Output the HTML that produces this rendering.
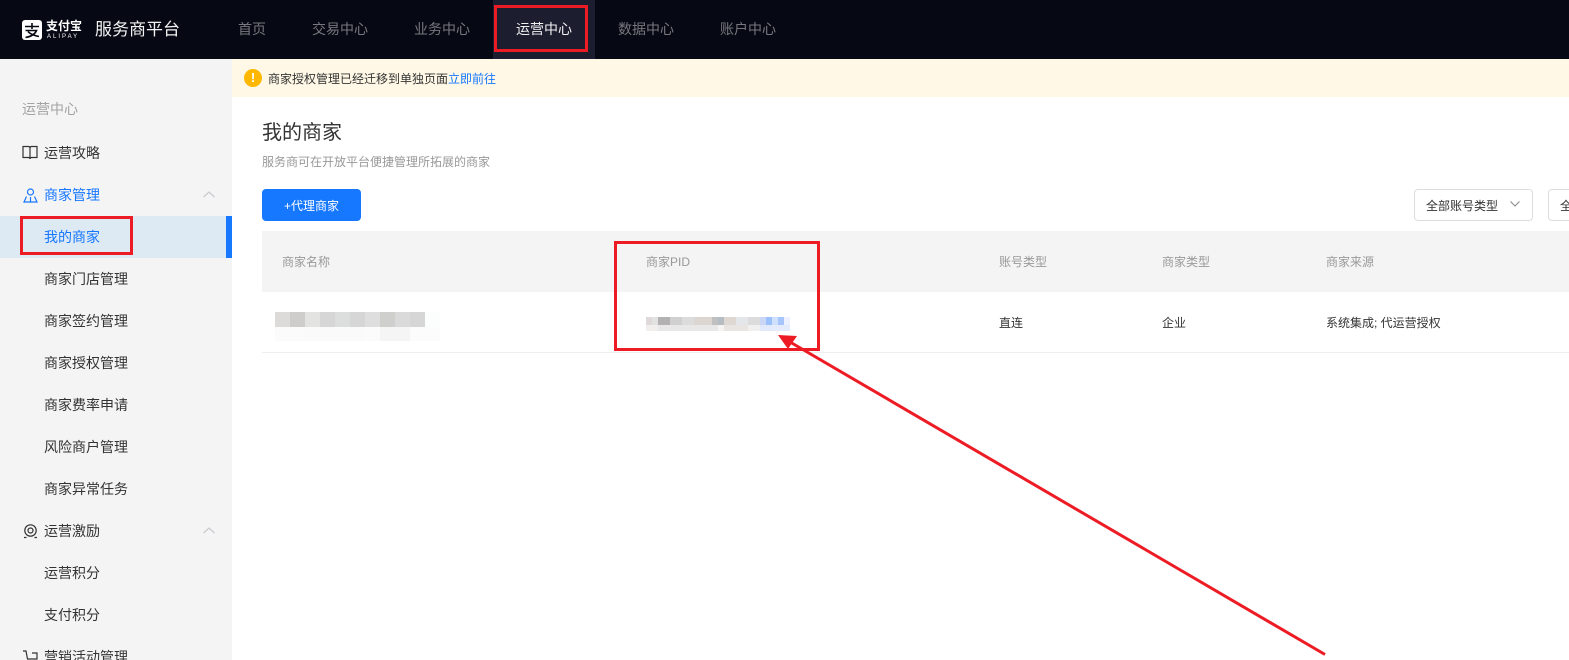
<!DOCTYPE html>
<html lang="zh-CN"><head><meta charset="utf-8"><title>服务商平台</title>
<style>
html,body{margin:0;padding:0;width:1569px;height:660px;overflow:hidden;background:#fff}
body{position:relative;font-family:"Liberation Sans","Noto Sans CJK SC",sans-serif;font-size:14px;color:#333}
.a{position:absolute;white-space:nowrap}
.nav{top:0;height:59px;line-height:58px;font-size:14px;color:#77787d}
.side{left:44px;height:42px;line-height:42px;font-size:14px;color:#333}
.th{top:232px;height:61px;line-height:61px;font-size:12px;color:#999}
.td{top:293px;height:60px;line-height:61px;font-size:12px;color:#333}
.red{border:3px solid #ed1c24;box-sizing:border-box}
svg{position:absolute;overflow:visible}
</style></head><body>
<div class="a" style="left:0;top:0;width:1569px;height:59px;background:#060914"></div>
<svg style="left:22px;top:20px" width="20" height="20" viewBox="0 0 20 20"><rect width="20" height="20" rx="3" fill="#fff"/><path d="M3 6.500h14M10 3v6M3.500 10.500h11c-1.500 3.500-5 6-11 7M6 11.500c2 2.500 6 4 11 5" stroke="#060914" stroke-width="1.600" fill="none"/></svg>
<div class="a" style="left:46px;top:18px;font-size:12px;line-height:16px;color:#fff;font-weight:700">支付宝</div>
<div class="a" style="left:47px;top:34px;font-size:6px;line-height:6px;color:#fff;letter-spacing:2px">ALIPAY</div>
<div class="a" style="left:95px;top:17px;font-size:17px;line-height:25px;color:#f2f2f2">服务商平台</div>
<div class="a nav" style="left:238px">首页</div>
<div class="a nav" style="left:312px">交易中心</div>
<div class="a nav" style="left:414px">业务中心</div>
<div class="a" style="left:493px;top:0;width:102px;height:59px;background:#1c1e30"></div>
<div class="a nav" style="left:516px;color:#f0f0f0">运营中心</div>
<div class="a nav" style="left:618px">数据中心</div>
<div class="a nav" style="left:720px">账户中心</div>

<div class="a" style="left:0;top:59px;width:232px;height:601px;background:#f4f4f4"></div>
<div class="a" style="left:22px;top:98px;font-size:14px;line-height:22px;color:#a3a3a3">运营中心</div>
<svg style="left:22px;top:145px" width="16" height="16" viewBox="0 0 16 16" fill="none" stroke="#333" stroke-width="1.200"><path d="M1 1.500h5.500q1.500 0 1.500 1.500v11q0-1.500-1.500-1.500H1zM15 1.500H9.500Q8 1.500 8 3v11q0-1.500 1.500-1.500H15z"/></svg>
<div class="a side" style="top:132px">运营攻略</div>
<svg style="left:23px;top:188px" width="15" height="15" viewBox="0 0 15 15" fill="none" stroke="#1677ff" stroke-width="1.200"><circle cx="7.500" cy="4" r="3"/><path d="M3.500 8.500 1 14h13l-2.500-5.500M7.500 9v5"/></svg>
<div class="a side" style="top:174px;color:#1677ff">商家管理</div>
<svg style="left:203px;top:191px" width="12" height="7" fill="none" stroke="#c9c9cf" stroke-width="1.200"><path d="M.5 6 6 1l5.500 5"/></svg>
<div class="a" style="left:0;top:216px;width:232px;height:42px;background:#dde9f3"></div>
<div class="a" style="left:226px;top:216px;width:6px;height:42px;background:#1677ff"></div>
<div class="a side" style="top:216px;color:#1677ff">我的商家</div>
<div class="a side" style="top:258px">商家门店管理</div>
<div class="a side" style="top:300px">商家签约管理</div>
<div class="a side" style="top:342px">商家授权管理</div>
<div class="a side" style="top:384px">商家费率申请</div>
<div class="a side" style="top:426px">风险商户管理</div>
<div class="a side" style="top:468px">商家异常任务</div>
<svg style="left:23px;top:524px" width="15" height="15" viewBox="0 0 15 15" fill="none" stroke="#333" stroke-width="1.200"><circle cx="7.500" cy="6.500" r="5.700"/><circle cx="7.500" cy="6.500" r="2.500"/><path d="M1 13.500h2.500M11.500 13.500H14"/></svg>
<div class="a side" style="top:510px">运营激励</div>
<svg style="left:203px;top:527px" width="12" height="7" fill="none" stroke="#c9c9cf" stroke-width="1.200"><path d="M.5 6 6 1l5.500 5"/></svg>
<div class="a side" style="top:552px">运营积分</div>
<div class="a side" style="top:594px">支付积分</div>
<svg style="left:23px;top:650px" width="15" height="12" viewBox="0 0 15 12" fill="none" stroke="#333" stroke-width="1.200"><path d="M0 1h3l1.500 8H14V3H9"/></svg>
<div class="a side" style="top:636px">营销活动管理</div>

<div class="a" style="left:232px;top:59px;width:1337px;height:38px;background:#fff8e6"></div>
<div class="a" style="left:244px;top:69px;width:18px;height:18px;border-radius:50%;background:#ffb700;color:#fff;font-size:13px;line-height:18px;text-align:center;font-weight:700">!</div>
<div class="a" style="left:268px;top:70px;font-size:12px;line-height:18px;color:#333">商家授权管理已经迁移到单独页面<span style="color:#1677ff">立即前往</span></div>

<div class="a" style="left:262px;top:118px;font-size:20px;line-height:30px;color:#333">我的商家</div>
<div class="a" style="left:262px;top:153px;font-size:12px;line-height:18px;color:#999">服务商可在开放平台便捷管理所拓展的商家</div>
<div class="a" style="left:262px;top:189px;width:99px;height:32px;background:#1677ff;border-radius:4px;color:#fff;font-size:12px;line-height:34px;text-align:center">+代理商家</div>
<div class="a" style="left:1414px;top:189px;width:119px;height:32px;box-sizing:border-box;border:1px solid #ddd;border-radius:4px;font-size:12px;line-height:32px;padding-left:11px;color:#333">全部账号类型</div>
<svg style="left:1510px;top:201px" width="10" height="6" fill="none" stroke="#888" stroke-width="1"><path d="M.5.500 5 5 9.500.500"/></svg>
<div class="a" style="left:1548px;top:189px;width:40px;height:32px;box-sizing:border-box;border:1px solid #ddd;border-radius:4px;font-size:12px;line-height:32px;padding-left:11px;color:#333">全</div>

<div class="a" style="left:262px;top:231px;width:1307px;height:61px;background:#f4f4f4"></div>
<div class="a th" style="left:282px">商家名称</div>
<div class="a th" style="left:646px">商家PID</div>
<div class="a th" style="left:999px">账号类型</div>
<div class="a th" style="left:1162px">商家类型</div>
<div class="a th" style="left:1326px">商家来源</div>
<div class="a" style="left:262px;top:352px;width:1307px;height:1px;background:#efefef"></div>
<div class="a td" style="left:999px">直连</div>
<div class="a td" style="left:1162px">企业</div>
<div class="a td" style="left:1326px">系统集成; 代运营授权</div>

<svg style="left:275px;top:312px" width="165" height="29" shape-rendering="crispEdges">
<rect x="0" width="15" height="15" fill="#dcdbd9"/><rect x="15" width="15" height="15" fill="#cecdcb"/><rect x="30" width="15" height="15" fill="#e3e3e2"/><rect x="45" width="15" height="15" fill="#d6d6d6"/><rect x="60" width="15" height="15" fill="#dcdedd"/><rect x="75" width="15" height="15" fill="#d6d6d6"/><rect x="90" width="15" height="15" fill="#dedede"/><rect x="105" width="15" height="15" fill="#cfd0ce"/><rect x="120" width="15" height="15" fill="#dadada"/><rect x="135" width="15" height="15" fill="#d6d6d6"/><rect x="150" width="15" height="15" fill="#fcfefd"/>
<rect x="0" y="15" width="30" height="14" fill="#fbfbfb"/><rect x="30" y="15" width="60" height="14" fill="#fafafa"/><rect x="90" y="15" width="30" height="14" fill="#fbfbfb"/><rect x="105" y="15" width="30" height="14" fill="#f5f5f5"/><rect x="135" y="15" width="30" height="14" fill="#fcfcfc"/>
</svg>
<svg style="left:646px;top:317px" width="144" height="14" shape-rendering="crispEdges">
<rect width="144" height="14" fill="#ececec"/>
<rect x="0" width="6" height="8" fill="#dfd9d9"/><rect x="6" width="6" height="8" fill="#e2e2e2"/><rect x="12" width="12" height="8" fill="#b3b1b1"/><rect x="24" width="12" height="8" fill="#d0d0d0"/><rect x="36" width="12" height="8" fill="#dcdcdc"/><rect x="48" width="18" height="8" fill="#dbd6d2"/><rect x="66" width="6" height="8" fill="#c0c0c0"/><rect x="72" width="6" height="8" fill="#b5bcc2"/><rect x="78" width="12" height="8" fill="#dfd7d2"/><rect x="90" width="12" height="8" fill="#e4e6e9"/><rect x="102" width="12" height="8" fill="#dcdcdc"/><rect x="114" width="6" height="8" fill="#c9d6f5"/><rect x="120" width="6" height="8" fill="#9cc0fb"/><rect x="126" width="6" height="8" fill="#cfe0fd"/><rect x="132" width="6" height="8" fill="#a6c5fb"/><rect x="138" width="6" height="8" fill="#edf2fe"/>
<rect x="0" y="8" width="12" height="6" fill="#f1eeee"/><rect x="12" y="8" width="60" height="6" fill="#e8e8e8"/><rect x="72" y="8" width="6" height="6" fill="#f4f4f4"/><rect x="78" y="8" width="24" height="6" fill="#e8e5e3"/><rect x="102" y="8" width="12" height="6" fill="#f0f0f0"/><rect x="114" y="8" width="12" height="6" fill="#e2e9fb"/><rect x="126" y="8" width="18" height="6" fill="#e4ebfc"/>
</svg>

<div class="a red" style="left:494px;top:5px;width:94px;height:47px"></div>
<div class="a red" style="left:20px;top:216px;width:113px;height:39px"></div>
<div class="a red" style="left:614px;top:241px;width:206px;height:110px"></div>
<svg style="left:0;top:0" width="1569" height="660">
<path d="M1325 654.500 790 342" stroke="#ed1c24" stroke-width="3" fill="none"/>
<path d="M778 335 797 336 788 349Z" fill="#ed1c24"/>
</svg>
</body></html>
